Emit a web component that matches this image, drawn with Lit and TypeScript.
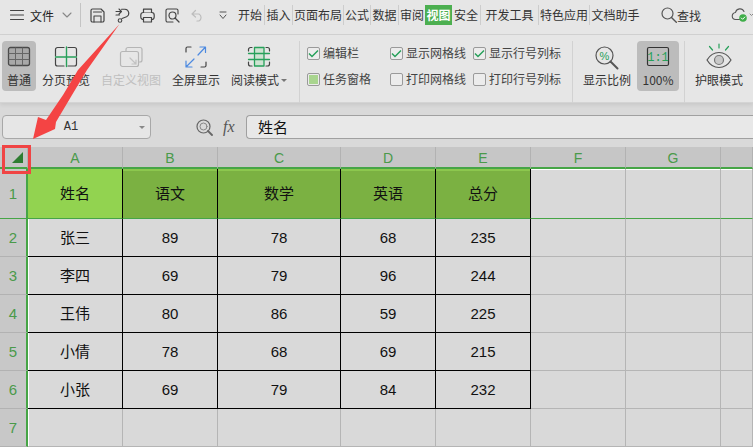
import { LitElement, html, css, svg } from "lit";
import { customElement } from "lit/decorators.js";

const TABS = [
  { t: "开始", w: 28 }, { t: "插入", w: 28, b: 1 }, { t: "页面布局", w: 51, b: 1 }, { t: "公式", w: 27, b: 1 },
  { t: "数据", w: 28, b: 1 }, { t: "审阅", w: 27, b: 1 }, { t: "视图", w: 27, on: 1 }, { t: "安全", w: 28 },
  { t: "开发工具", w: 58, b: 1 }, { t: "特色应用", w: 51, b: 1 }, { t: "文档助手", w: 52, b: 1 },
];

const ic = (w: number, h: number, body: unknown) =>
  html`<svg width=${w} height=${h} viewBox="0 0 ${w} ${h}" fill="none" stroke-linecap="round" stroke-linejoin="round">${body}</svg>`;

const D = "#444";
const G = "#27a05a";

const I = {
  grid: ic(24, 22, svg`<rect x="1.5" y="1.5" width="21" height="18" rx="2" fill="#a8a8a8" stroke="#4a4a4a" stroke-width="1.3"/>
    <path d="M8.5 2v17M15.5 2v17M2 7.5h20M2 13.5h20" stroke="#666"/>`),
  page: ic(24, 22, svg`<path d="M10 1.500H3.500a2 2 0 0 0-2 2V10M1.500 12v6a2 2 0 0 0 2 2H10M14 1.500h6.500a2 2 0 0 1 2 2V10M22.500 12v6a2 2 0 0 1-2 2H14" stroke="${D}" stroke-width="1.200"/>
    <path d="M12.500 1v19.500M1.500 11h21" stroke="${G}" stroke-width="1.400"/>`),
  custom: ic(24, 24, svg`<path d="M7 5V3.500a2 2 0 0 1 2-2h12a2 2 0 0 1 2 2V14a2 2 0 0 1-2 2h-1" stroke="#b5b5b5" stroke-width="1.200"/>
    <rect x="1.500" y="5.500" width="18" height="15" rx="2" stroke="#b5b5b5" stroke-width="1.200"/>
    <path d="M11 12l6 6M17 14v4h-4" stroke="#c2c2c2" stroke-width="1.200"/>`),
  full: ic(22, 22, svg`<path d="M1 6V2.500A1.500 1.500 0 0 1 2.500 1H6M21 16v3.500a1.500 1.500 0 0 1-1.500 1.500H16" stroke="${D}" stroke-width="1.200"/>
    <path d="M13 9l7-7.500M15 1h5.500v5.500M9 13l-7.500 7.500M1 15v6h6" stroke="#4d8ae0" stroke-width="1.200"/>`),
  read: ic(24, 22, svg`<rect x="7" y="1.500" width="10" height="18.500" fill="#cfe3d2"/>
    <path d="M5 1.500H3.500a2 2 0 0 0-2 2V5M1.500 16v2a2 2 0 0 0 2 2H5M19 1.500h1.500a2 2 0 0 1 2 2V5M22.500 16v2a2 2 0 0 1-2 2H19" stroke="${D}" stroke-width="1.200"/>
    <path d="M7.500 1.500h9.500V20H7.500zM1.500 7.500h21M1.500 13.500h21" stroke="${G}" stroke-width="1.300"/>`),
  pct: ic(24, 24, svg`<circle cx="9.500" cy="9.500" r="8.500" stroke="#555" stroke-width="1.200"/>
    <path d="M15.500 15.500l7 7" stroke="#555" stroke-width="2"/>
    <text x="9.500" y="13.500" text-anchor="middle" font-size="11" font-family="Liberation Sans" fill="${G}" stroke="none">%</text>`),
  one: ic(24, 22, svg`<rect x="1.500" y="1.500" width="21" height="18" rx="1.500" fill="#bdbdbd" stroke="#333" stroke-width="1.200"/>
    <text x="12" y="15" text-anchor="middle" font-size="12" font-family="Liberation Mono" fill="${G}" stroke="none">1:1</text>`),
  eye: ic(26, 26, svg`<path d="M1 17c3-5 7.500-7.500 12-7.500S22 12 25 17c-3 5-7.500 7.500-12 7.500S4 22 1 17z" stroke="#555" stroke-width="1.200"/>
    <circle cx="13" cy="17" r="4.500" fill="#c8c8c8" stroke="#777" stroke-width="1.200"/>
    <path d="M13 1v4M3.500 3.500l3 3.500M22.500 3.500l-3 3.500" stroke="${G}" stroke-width="1.200"/>`),
  burger: ic(14, 12, svg`<path d="M0.500 1.500h13M0.500 6h13M0.500 10.500h13" stroke="#444" stroke-width="1.100"/>`),
  chev: ic(10, 7, svg`<path d="M1 1l4 4 4-4" stroke="#888" stroke-width="1.100"/>`),
  save: ic(15, 15, svg`<path d="M2.500 1h8.500l3 3v8.500a1.500 1.500 0 0 1-1.500 1.500h-10A1.500 1.500 0 0 1 1 12.500v-10A1.500 1.500 0 0 1 2.500 1z" stroke="#444" stroke-width="1.200"/>
    <path d="M4 14V8h7v6M3.500 4h8" stroke="#444" stroke-width="1.100"/>`),
  share: ic(15, 15, svg`<path d="M1 3.500h5M4 1l2.500 2.500L4 6M6.500 1.200h3.500a4 4 0 0 1 1.500 7.600L7 10.500M1 7h3.500" stroke="#444" stroke-width="1.100"/>
    <circle cx="5" cy="12.500" r="1.800" stroke="#444" stroke-width="1.100"/>`),
  print: ic(15, 15, svg`<rect x="0.800" y="4.500" width="13.400" height="7" rx="2.500" stroke="#444" stroke-width="1.200"/>
    <path d="M3.500 4.500V1.200h8v3.300M3.500 9.500h8V14h-8z" fill="#e6e6e6" stroke="#444" stroke-width="1.200"/>`),
  prev: ic(15, 15, svg`<path d="M13 6V2.500A1.500 1.500 0 0 0 11.500 1h-9A1.500 1.500 0 0 0 1 2.500v10A1.500 1.500 0 0 0 2.500 14H8" stroke="#444" stroke-width="1.100"/>
    <circle cx="7.500" cy="7.500" r="3.500" stroke="#444" stroke-width="1.200"/><path d="M10 10l4 4" stroke="#444" stroke-width="1.300"/>`),
  undo: ic(13, 13, svg`<path d="M1 5h7a4 4 0 0 1 0 7H6M4.500 1.500L1 5l3.500 3" stroke="#bdbdbd" stroke-width="1.200"/>`),
  more: ic(8, 9, svg`<path d="M1 1h6M1 4l3 3.500L7 4" stroke="#555" stroke-width="1"/>`),
  find: ic(16, 16, svg`<circle cx="6.500" cy="6.500" r="5.500" stroke="#555" stroke-width="1.200"/><path d="M10.500 10.500l4.800 4.800" stroke="#555" stroke-width="1.400"/>`),
  cloud: ic(22, 14, svg`<path d="M12 11.500H5a3.500 3.500 0 0 1-.5-7A4.500 4.500 0 0 1 13 3.500" stroke="#555" stroke-width="1.100"/>
    <circle cx="12" cy="10" r="3.800" fill="#3fae49"/><path d="M10.300 10l1.300 1.300 2.200-2.300" stroke="#fff"/><path d="M19 6l1.500 1.500L22 6" stroke="#888"/>`),
  lens: ic(17, 17, svg`<circle cx="7.500" cy="7.500" r="6.500" stroke="#666" stroke-width="1.200"/><circle cx="7.500" cy="7.500" r="3.500" stroke="#888"/><path d="M12 12l4 4" stroke="#666" stroke-width="1.800"/>`),
};

const BIG_L = [
  { t: "普通", w: 34, i: I.grid, on: 1 },
  { t: "分页预览", w: 60, i: I.page },
  { t: "自定义视图", w: 70, i: I.custom, dim: 1 },
  { t: "全屏显示", w: 60, i: I.full },
  { t: "阅读模式", w: 66, i: I.read, caret: 1 },
];

const COLS = ["A", "B", "C", "D", "E", "F", "G", ""];
const HEAD = ["姓名", "语文", "数学", "英语", "总分"];
const ROWS = [
  ["张三", "89", "78", "68", "235"],
  ["李四", "69", "79", "96", "244"],
  ["王伟", "80", "86", "59", "225"],
  ["小倩", "78", "68", "69", "215"],
  ["小张", "69", "79", "84", "232"],
];

@customElement("app-root")
export class AppRoot extends LitElement {
  static styles = css`
    :host {
      display: block; position: relative; width: 753px; height: 447px; overflow: hidden;
      background: #d9d9d9; color: #333;
      font-family: "Noto Sans CJK SC", "Liberation Sans", sans-serif; font-size: 12px;
    }
    .top { height: 35px; box-sizing: border-box; padding-bottom: 4px; display: flex; align-items: center; background: #e6e6e6; border-bottom: 1px solid #d2d2d2; }
    .burger { display: flex; margin-left: 10px; }
    .file { margin-left: 6px; color: #222; width: 32px; }
    .chev { display: flex; width: 12px; }
    .vsep { width: 1px; height: 24px; background: #c4c4c4; margin: 0 5px 0 6px; }
    .qa { display: flex; align-items: center; width: 151px; margin-left: -1px; }
    .qa > span { display: flex; justify-content: center; width: 25px; }
    .qa > span.more { width: 14px; margin-left: 6px; }
    .tabs { display: flex; align-items: center; height: 20px; }
    .tab { height: 20px; line-height: 20px; text-align: center; white-space: nowrap; box-sizing: border-box; font-size: 12px; color: #333; }
    .tab.b { border-left: 1px solid #cdcdcd; }
    .tab.on { background: #4caf50; color: #fff; font-weight: 700; }
    .find { display: flex; align-items: center; margin-left: 20px; width: 70px; font-size: 12px; }
    .cloud { display: flex; }

    .ribbon { height: 68px; display: flex; background: #e6e6e6; box-sizing: border-box; padding: 6px 0 0 2px; border-bottom: 1px solid #d4d4d4; box-shadow: 0 2px 4px rgba(0,0,0,.08); position: relative; }
    .big { height: 50px; flex: none; display: flex; flex-direction: column; align-items: center; border-radius: 4px; white-space: nowrap; }
    .big .ico { height: 29px; padding-top: 5px; display: flex; align-items: flex-start; box-sizing: border-box; }
    .big .lb { line-height: 18px; margin-top: 1px; }
    .big.on { background: #bcbcbc; }
    .big.dim .lb { color: #c0c0c0; }
    .big.nudge { box-sizing: border-box; padding-left: 4px; }
    .big.eye .ico { padding-top: 2px; }
    .caret { display: inline-block; width: 0; height: 0; border: 3px solid transparent; border-top: 3px solid #777; border-bottom: 0; margin-left: 2px; vertical-align: 3px; }
    .rsep { width: 1px; flex: none; height: 62px; background: #d2d2d2; }
    .s1 { margin-left: 7px; }
    .s2 { margin-left: 5px; }
    .checks { display: grid; flex: none; grid-template-columns: 83px 83px 83px; grid-auto-rows: 26px; padding: 4px 16px 0 7px; }
    .chk { display: flex; align-items: center; gap: 3px; white-space: nowrap; height: 16px; line-height: 16px; color: #444; }
    .box { width: 13px; height: 13px; box-sizing: border-box; border: 1px solid #9a9a9a; border-radius: 2px; background: #ececec; display: flex; align-items: center; justify-content: center; flex: none; }
    .fill { width: 9px; height: 9px; background: #a9d58f; }

    .fbar { height: 44px; box-sizing: border-box; padding: 12px 0 0 2px; display: flex; background: #d9d9d9; }
    .name { width: 149px; height: 24px; box-sizing: border-box; border: 1px solid #a8a8a8; border-radius: 4px; background: #e6e6e6; display: flex; align-items: center; font-family: "Liberation Mono", monospace; font-size: 12px; color: #333; }
    .name span { width: 136px; text-align: center; }
    .name i { border: 3px solid transparent; border-top: 3px solid #888; border-bottom: 0; }
    .lens { display: flex; margin: 4px 0 0 45px; }
    .fx { width: 18px; margin: 1px 0 0 10px; font-family: "Liberation Serif", serif; font-style: italic; font-size: 16px; color: #555; line-height: 22px; }
    .input { flex: 1; margin-left: 5px; height: 24px; box-sizing: border-box; border: 1px solid #a0a0a0; border-right: 0; border-radius: 4px 0 0 4px; background: #e8e8e8; padding-left: 11px; font-size: 15px; line-height: 22px; color: #111; }

    .sheet { display: grid; grid-template-columns: 28px 95px 95px 123px 95px 95px 95px 95px 32px; grid-template-rows: 22px 50px repeat(6, 38px); }
    .sheet > div { box-sizing: border-box; display: flex; align-items: center; justify-content: center; }
    .ch { background: #c6c6c6; border-right: 1px solid #b2b2b2; border-bottom: 2px solid #46a546; color: #4a9a4a; font-family: "Liberation Sans", sans-serif; font-size: 14px; padding-top: 1px; }
    .rh { background: #c8c8c8; border-right: 2px solid #46a546; border-bottom: 1px solid #b2b2b2; color: #4a9a4a; font-family: "Liberation Sans", sans-serif; font-size: 15px; }
    .cell { background: #d9d9d9; border-right: 1px solid #b5b5b5; border-bottom: 1px solid #b5b5b5; color: #111; font-size: 15px; padding-bottom: 2px; }
    .cell.num { font-family: "Liberation Sans", sans-serif; padding-bottom: 0; }
    .cell.k { border-right-color: #000; border-bottom-color: #000; }
    .cell.hd { background: #7bb142; border-right-color: #000; border-bottom-color: #46a546; box-shadow: inset 0 2px 0 #8cc74e; }
    .cell.hd.first { background: #92d350; box-shadow: none; }
    .cell.top1 { border-bottom-color: #46a546; box-shadow: inset 0 1px 0 #fff; }
    .cell.first-col { box-shadow: inset 1px 0 0 #fff; }
    .rh.r1 { border-bottom-color: #46a546; }

    .over { position: absolute; left: 0; top: 0; pointer-events: none; }
    .redbox { position: absolute; left: 2px; top: 145px; width: 29px; height: 29px; box-sizing: border-box; border: 3px solid #f04444; }
  `;

  render() {
    return html`
      <div class="top">
        <span class="burger">${I.burger}</span>
        <span class="file">文件</span>
        <span class="chev">${I.chev}</span>
        <span class="vsep"></span>
        <div class="qa">
          <span>${I.save}</span><span>${I.share}</span><span>${I.print}</span><span>${I.prev}</span><span>${I.undo}</span><span class="more">${I.more}</span>
        </div>
        <div class="tabs">
          ${TABS.map((t) => html`<div class="tab ${t.b ? "b" : ""} ${t.on ? "on" : ""}" style="width:${t.w}px">${t.t}</div>`)}
        </div>
        <div class="find">${I.find}<span>查找</span></div>
        <span class="cloud">${I.cloud}</span>
      </div>

      <div class="ribbon">
        ${BIG_L.map((b) => html`<div class="big ${b.on ? "on" : ""} ${b.dim ? "dim" : ""}" style="width:${b.w}px">
          <div class="ico">${b.i}</div>
          <div class="lb">${b.t}${b.caret ? html`<i class="caret"></i>` : ""}</div>
        </div>`)}
        <div class="rsep s1"></div>
        <div class="checks">
          ${this.chk("编辑栏", true)}${this.chk("显示网格线", true)}${this.chk("显示行号列标", true)}
          ${this.chk("任务窗格", false, true)}${this.chk("打印网格线", false)}${this.chk("打印行号列标", false)}
        </div>
        <div class="rsep"></div>
        <div class="big nudge" style="width:64px"><div class="ico">${I.pct}</div><div class="lb">显示比例</div></div>
        <div class="big on" style="width:42px"><div class="ico">${I.one}</div><div class="lb">100%</div></div>
        <div class="rsep s2"></div>
        <div class="big eye" style="width:68px"><div class="ico">${I.eye}</div><div class="lb">护眼模式</div></div>
      </div>

      <div class="fbar">
        <div class="name"><span>A1</span><i></i></div>
        <span class="lens">${I.lens}</span>
        <span class="fx">fx</span>
        <div class="input">姓名</div>
      </div>

      <div class="sheet">
        <div class="ch"></div>
        ${COLS.map((c) => html`<div class="ch">${c}</div>`)}
        <div class="rh r1">1</div>
        ${HEAD.map((h, i) => html`<div class="cell hd ${i === 0 ? "first" : ""}">${h}</div>`)}
        ${[0, 1, 2].map(() => html`<div class="cell top1"></div>`)}
        ${ROWS.map((r, ri) => html`
          <div class="rh">${ri + 2}</div>
          ${r.map((v, i) => html`<div class="cell k ${i ? "num" : "first-col"}">${v}</div>`)}
          ${[0, 1, 2].map(() => html`<div class="cell"></div>`)}
        `)}
        <div class="rh">7</div>
        ${[0, 1, 2, 3, 4, 5, 6, 7].map((i) => html`<div class="cell ${i === 0 ? "first-col" : ""}"></div>`)}
      </div>

      <svg class="over" width="753" height="447" viewBox="0 0 753 447">
        <path d="M12 163L23 152V163Z" fill="#2f7d32"/>
        <path d="M119.500 24L87 70L72 95L56 122L55 129L33 139L38 117L46 120L63 95L78 70Z" fill="#f44444"/>
      </svg>
      <div class="redbox"></div>
    `;
  }

  chk(t: string, on: boolean, fill = false) {
    return html`<div class="chk"><span class="box">
      ${on ? html`<svg width="11" height="9" viewBox="0 0 11 9" fill="none"><path d="M1 4.500L4 7.500L10 1.500" stroke="#27a05a" stroke-width="1.500"/></svg>` : ""}
      ${fill ? html`<span class="fill"></span>` : ""}
    </span>${t}</div>`;
  }
}
